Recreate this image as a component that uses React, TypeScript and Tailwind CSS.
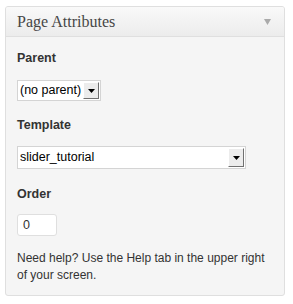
const Arrow = () => (
    <svg width="7" height="4" viewBox="0 0 7 4">
        <path d="M0 0 H7 L3.5 4 Z" fill="#000" />
    </svg>
)

const FakeSelect = ({ value, width, height }: { value: string; width: string; height: string }) => {
    return (
        <div className={`flex flex-row items-stretch bg-white border border-solid border-[#d4d4d4] ${width} ${height}`}>
            <div className="flex-1 flex items-center pl-[2px] pr-[1px] text-[12.5px] text-black whitespace-nowrap">{value}</div>
            <div className="w-[16px] shrink-0 m-[1px] flex items-center justify-center bg-[#ececec] border border-solid border-t-[#fff] border-l-[#fff] border-r-[#707070] border-b-[#707070]">
                <Arrow />
            </div>
        </div>
    )
}

const App = () => {
    return (
        <div className="w-[293px] h-[304px] bg-white pt-[6px] pl-[5px]">
            <div className="w-[280px] h-[290px] flex flex-col border border-solid border-[#dfdfdf] rounded-[3px] overflow-hidden bg-[#f5f5f5]">
                <div className="h-[30px] shrink-0 flex flex-row items-center justify-between pl-[11px] pr-[13px] border-b border-solid border-[#dfdfdf] bg-gradient-to-b from-[#f9f9f9] to-[#ececec]">
                    <p className="text-[16px] text-[#464646] font-['Liberation_Serif',serif] pt-[1px]">
                        Page Attributes
                    </p>
                    <svg width="7" height="6" viewBox="0 0 7 6" className="mt-[1px]">
                        <path d="M0 0 H7 L3.5 6 Z" fill="#aaa" />
                    </svg>
                </div>
                <div className="flex-1 flex flex-col items-start pl-[11px] pt-[13px] font-['Liberation_Sans',sans-serif] text-[12px] leading-[17px] text-[#333]">
                    <p className="font-bold text-[12.5px]">Parent</p>
                    <div className="mt-[13px]">
                        <FakeSelect value="(no parent)" width="w-auto" height="h-[21px]" />
                    </div>
                    <p className="font-bold text-[12.5px] mt-[16px]">Template</p>
                    <div className="mt-[12px]">
                        <FakeSelect value="slider_tutorial" width="w-[229px]" height="h-[23px]" />
                    </div>
                    <p className="font-bold text-[12.5px] mt-[17px]">Order</p>
                    <div className="mt-[11px] w-[40px] h-[22px] flex items-center pl-[5px] bg-white border border-solid border-[#dfdfdf] rounded-[3px] text-[12.5px] text-[#333]">
                        0
                    </div>
                    <p className="mt-[14px] pr-[14px]">
                        Need help? Use the Help tab in the upper right of your screen.
                    </p>
                </div>
            </div>
        </div>
    )
}

export default App
